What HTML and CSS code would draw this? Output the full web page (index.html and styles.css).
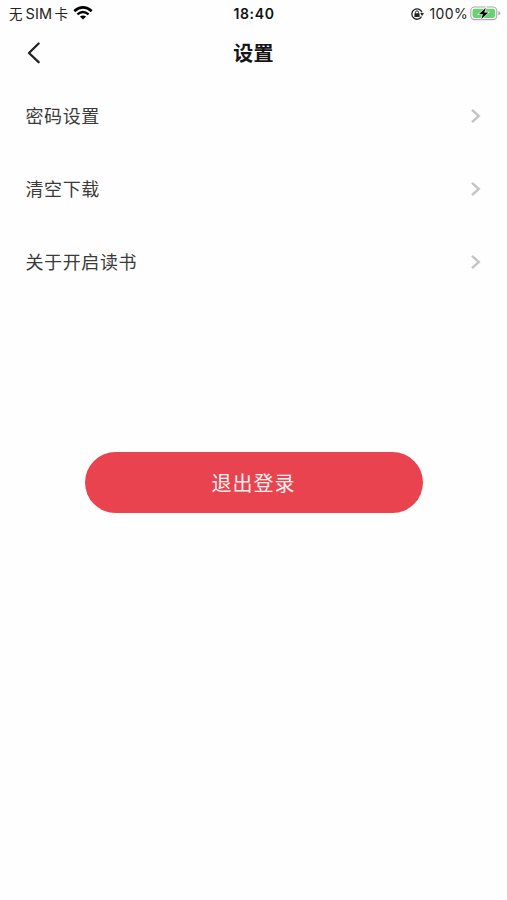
FILE: index.html
```html
<!DOCTYPE html>
<html lang="zh-CN">
<head>
<meta charset="utf-8">
<title>设置</title>
<link rel="stylesheet" href="styles.css">
</head>
<body>
<header class="top">
  <div class="status">
    <div class="status-left">
      <span class="carrier"><span class="cjk">无</span><span class="sim">SIM</span><span class="cjk">卡</span></span>
      <svg class="wifi" width="20" height="14" viewBox="0 0 20 14" fill="none" stroke="#000">
        <path d="M1.3 5.1 Q10 -2.3 18.7 5.1" stroke-width="2.7"/>
        <path d="M4.4 8.4 Q10 3.7 15.6 8.4" stroke-width="2.4"/>
        <path d="M6.9 10.6 Q10 8.2 13.1 10.6 L10 13.6Z" fill="#000" stroke="none"/>
      </svg>
    </div>
    <time class="clock">18:40</time>
    <div class="status-right">
      <svg class="lock" width="14" height="14" viewBox="0 0 14 14" fill="none" stroke="#222">
        <path d="M11.5 9.7 A5.2 5.2 0 1 1 11.9 5.2" stroke-width="1.3"/>
        <path d="M10.2 6.1 H14 L12.1 9Z" fill="#222" stroke="none"/>
        <rect x="4.4" y="6.3" width="5.2" height="3.8" rx=".5" fill="#222" stroke="none"/>
        <path d="M5.5 6.5 V5.4 A1.5 1.5 0 0 1 8.5 5.4 V6.5" stroke-width="1"/>
      </svg>
      <span class="percent">100%</span>
      <svg class="battery" width="31" height="15" viewBox="0 0 31 15">
        <rect x=".8" y="1" width="26" height="12.6" rx="3.8" fill="#fff" stroke="#aaa" stroke-width="1.1"/>
        <rect x="2.5" y="2.7" width="22.6" height="9.2" rx="2.3" fill="#65d36e"/>
        <path d="M28.3 5 Q30.3 5.8 30.3 7.3 Q30.3 8.8 28.3 9.6Z" fill="#aaa"/>
        <path d="M15.8 1.8 L8.8 8.3 H12.9 L11.2 13.3 L18.4 6.5 H14.3Z" fill="#000" stroke="#fff" stroke-width="1.3" paint-order="stroke"/>
      </svg>
    </div>
  </div>
  <nav class="nav">
    <svg class="back" width="14" height="22" viewBox="0 0 14 22" fill="none" stroke="#222" stroke-width="2.3" stroke-linecap="round" stroke-linejoin="round"><path d="M11.6 1.5 L2 11 L11.6 20.2"/></svg>
    <h1 class="title">设置</h1>
  </nav>
</header>
<main>
  <ul class="list">
    <li class="row"><span class="label">密码设置</span><svg class="arrow" width="11" height="16" viewBox="0 0 11 16"><path d="M2 1.8 L8.8 8 L2 14.2"/></svg></li>
    <li class="row"><span class="label">清空下载</span><svg class="arrow" width="11" height="16" viewBox="0 0 11 16"><path d="M2 1.8 L8.8 8 L2 14.2"/></svg></li>
    <li class="row"><span class="label">关于开启读书</span><svg class="arrow" width="11" height="16" viewBox="0 0 11 16"><path d="M2 1.8 L8.8 8 L2 14.2"/></svg></li>
  </ul>
  <button class="logout">退出登录</button>
</main>
</body>
</html>
```
FILE: styles.css
```css
* { box-sizing: border-box; }
body {
  margin: 0;
  min-height: 900px;
  background: #fefefe;
  color: #3a3a3a;
  font-family: Inter, "Noto Sans CJK SC", sans-serif;
}
.status {
  display: grid;
  grid-template-columns: 1fr auto 1fr;
  align-items: center;
  height: 27px;
  padding: 0 6px 0 9px;
  color: #222;
  font-size: 14px;
  line-height: 20px;
}
.status-left, .status-right, .carrier { display: flex; align-items: center; }
.status-right { justify-content: flex-end; }
.cjk { font-size: 13.5px; }
.sim { margin: 0 2px 0 3px; font-size: 14.5px; letter-spacing: .2px; }
.wifi { margin-left: 5.5px; margin-top: -2px; }
.clock { margin-right: 2px; color: #111; font-weight: 600; font-size: 14px; letter-spacing: .65px; }
.percent { margin: 0 2px 0 5.5px; font-size: 14px; letter-spacing: .35px; }
.nav {
  display: grid;
  grid-template-columns: 1fr auto 1fr;
  align-items: center;
  height: 52px;
  padding: 0 27px;
}
.title {
  margin: 0;
  padding-top: 2px;
  color: #151515;
  font-size: 20px;
  font-weight: 700;
  line-height: 30px;
  letter-spacing: .3px;
}
.list { margin: 0; padding: 0; list-style: none; }
.row {
  display: flex;
  align-items: center;
  justify-content: space-between;
  height: 73.4px;
  padding: 0 26px 0 25.5px;
  font-size: 18px;
  letter-spacing: .6px;
}
.label { padding-bottom: 2px; }
.arrow { fill: none; stroke: #c4c4c4; stroke-width: 2.4; }
.logout {
  display: block;
  width: 338px;
  height: 61px;
  margin: 152.8px auto 0;
  padding: 3px 0 0;
  border: 0;
  border-radius: 31px;
  background: #ea4350;
  color: #fff0f0;
  font: 400 20px/30px Inter, "Noto Sans CJK SC", sans-serif;
  letter-spacing: 1px;
}
```
